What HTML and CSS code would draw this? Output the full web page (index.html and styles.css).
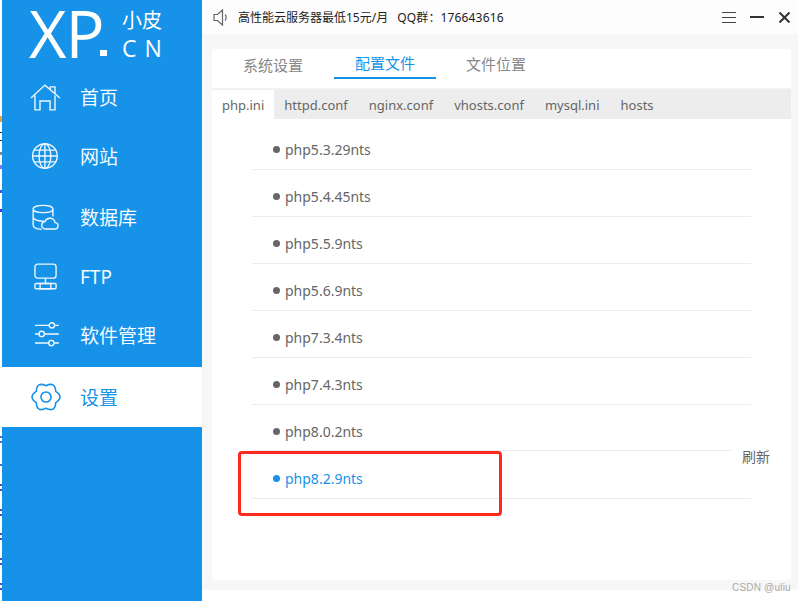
FILE: index.html
```html
<!DOCTYPE html>
<html lang="zh">
<head>
<meta charset="utf-8">
<title>小皮面板</title>
<link rel="stylesheet" href="styles.css">
</head>
<body>
<div class="app">
  <div class="edge"></div>
  <aside class="sidebar">
    <div class="logo">
      <span class="logo-xp">XP<i class="logo-dot"></i></span>
      <span class="logo-side"><span class="logo-cn">小皮</span><span class="logo-en">CN</span></span>
    </div>
    <nav class="nav">
      <a class="nav-item"><svg class="nav-icon" viewBox="0 0 28 26"><path d="M0 14 13 1.900 27 14M3.700 11.500V25h4.700v-8.300h9.400V25h4.600V11.500M18 5.500V3.500h4.400V10"/></svg><span>首页</span></a>
      <a class="nav-item up1"><svg class="nav-icon" viewBox="0 0 28 26"><circle cx="13" cy="13" r="11.500"/><ellipse cx="13" cy="13" rx="5.500" ry="11.500"/><path d="M13 1.500v23M1.500 13h23M3 7.500h20M3 18.500h20"/></svg><span>网站</span></a>
      <a class="nav-item"><svg class="nav-icon" viewBox="0 0 28 26"><path d="M2 5.500c0-4.500 18.500-4.500 18.500 0s-18.500 4.500-18.500 0v15c0 2.500 4 3.800 8 4M2 13c0 2.500 5 4 10 4M20.500 5.500v7"/><path d="M14 24.200h8a3 3 0 0 0 .5-6 5 5 0 0 0-9.500-1 3.500 3.500 0 0 0 1 7z"/></svg><span>数据库</span></a>
      <a class="nav-item"><svg class="nav-icon" viewBox="0 0 28 26"><rect x="3.700" y="1" width="19.700" height="13" rx="2.500"/><path d="M13.500 14v5M8.500 19h10v5h-10z"/><rect x="3.700" y="19" width="19.700" height="5" rx="1"/></svg><span>FTP</span></a>
      <a class="nav-item up2"><svg class="nav-icon" viewBox="0 0 28 26"><path d="M3.700 4h13.300M22 4h4M3.700 12h3.800M12.500 12h13.500M3.700 20.500h12.800M21.500 20.500h4.500"/><circle cx="19.500" cy="4" r="2.500"/><circle cx="10" cy="12" r="2.500"/><circle cx="19" cy="20.500" r="2.500"/></svg><span>软件管理</span></a>
      <a class="nav-item active"><svg class="nav-icon" viewBox="0 0 28 26"><circle cx="14" cy="13" r="4.700"/><path stroke-linejoin="round" d="M23.090 18.250Q31 13 23.090 7.750 22.500 -1.720 14 2.500 5.500 -1.720 4.910 7.750 -3 13 4.910 18.250 5.500 27.720 14 23.500 22.500 27.720 23.090 18.250z"/></svg><span>设置</span></a>
    </nav>
  </aside>
  <main class="main">
    <header class="topbar">
      <svg class="speaker" viewBox="0 0 15 17"><path d="M1 5.500h3.500L9.500 1v15l-5-4.500H1zM12 5.500c1.500 1.500 1.500 4.500 0 6"/></svg>
      <span class="notice">高性能云服务器最低15元/月</span>
      <span class="notice qq">QQ群：176643616</span>
      <div class="win-controls">
        <span class="ctl-menu"></span>
        <span class="ctl-min"></span>
        <svg class="ctl-close" viewBox="0 0 11 11"><path d="M.5.500l10 10M10.500.500l-10 10"/></svg>
      </div>
    </header>
    <section class="body">
      <div class="card">
        <div class="tabs">
          <a class="tab">系统设置</a>
          <a class="tab current">配置文件</a>
          <a class="tab last">文件位置</a>
        </div>
        <div class="subtabs">
          <a class="subtab current">php.ini</a>
          <a class="subtab">httpd.conf</a>
          <a class="subtab">nginx.conf</a>
          <a class="subtab">vhosts.conf</a>
          <a class="subtab">mysql.ini</a>
          <a class="subtab">hosts</a>
        </div>
        <ul class="list">
          <li class="row"><span class="dot"></span>php5.3.29nts</li>
          <li class="row"><span class="dot"></span>php5.4.45nts</li>
          <li class="row"><span class="dot"></span>php5.5.9nts</li>
          <li class="row"><span class="dot"></span>php5.6.9nts</li>
          <li class="row"><span class="dot"></span>php7.3.4nts</li>
          <li class="row"><span class="dot"></span>php7.4.3nts</li>
          <li class="row short"><span class="dot"></span>php8.0.2nts</li>
          <li class="row selected"><span class="dot"></span>php8.2.9nts</li>
        </ul>
      </div>
    </section>
  </main>
  <a class="refresh">刷新</a>
  <div class="mark"></div>
  <span class="watermark">CSDN @uliu</span>
</div>
</body>
</html>
```
FILE: styles.css
```css
* { box-sizing: border-box; }
html, body { margin: 0; padding: 0; }
body { width: 798px; height: 601px; overflow: hidden; background: #fff; font-family: "Noto Sans", "Noto Sans CJK SC", sans-serif; }
a { display: block; }
.app { position: relative; display: flex; width: 798px; height: 601px; }
.edge { width: 2px; flex: none; background: linear-gradient(#fff 116px, #f0a030 116px, #f0a030 122px, #fff 122px, #fff 132px, #333 132px, #333 133px, #fff 133px, #fff 140px, #333 140px, #333 141px, #fff 141px, #fff 152px, #888 152px, #888 155px, #fff 155px, #fff 165px, #7a7aee 165px, #7a7aee 169px, #fff 169px, #fff 190px, #3a5ae8 190px, #3a5ae8 193px, #fff 193px, #fff 209px, #3a3ae8 209px, #3a3ae8 212px, #fff 212px, #fff 436px, #4a70d0 436px, #4a70d0 438px, #fff 438px, #fff 441px, #4a70d0 441px, #4a70d0 443px, #fff 443px, #fff 464px, #4a70d0 464px, #4a70d0 466px, #fff 466px, #fff 484px, #4a50c0 484px, #4a50c0 486px, #fff 486px, #fff 489px, #4a50c0 489px, #4a50c0 491px, #fff 491px, #fff 509px, #4a50c0 509px, #4a50c0 511px, #fff 511px, #fff 514px, #4a50c0 514px, #4a50c0 516px, #fff 516px, #fff 533px, #4a50c0 533px, #4a50c0 535px, #fff 535px, #fff 538px, #4a50c0 538px, #4a50c0 540px, #fff 540px, #fff 558px, #4a50c0 558px, #4a50c0 560px, #fff 560px, #fff 563px, #4a50c0 563px, #4a50c0 565px, #fff 565px, #fff 583px, #4a50c0 583px, #4a50c0 585px, #fff 585px, #fff 588px, #4a50c0 588px, #4a50c0 590px, #fff 590px); }
.sidebar { width: 200px; flex: none; background: #1692e8; color: #fff; }
.logo { height: 67px; display: flex; padding-left: 27px; }
.logo-xp { font: 400 65px/66px "Open Sans", sans-serif; letter-spacing: -1px; width: 93px; height: 66px; position: relative; white-space: nowrap; }
.logo-dot { position: absolute; left: 71px; top: 50px; width: 7px; height: 6px; background: #fff; }
.logo-side { display: flex; flex-direction: column; }
.logo-cn { font: 400 20px/20px "Noto Sans CJK SC", sans-serif; margin-top: 10px; white-space: nowrap; }
.logo-en { font: 400 23px/23px "Open Sans", sans-serif; letter-spacing: 8px; margin-top: 7px; white-space: nowrap; }
.nav-item { display: flex; align-items: center; height: 60px; padding-left: 29px; font-size: 19px; color: #f4faff; }
.nav-item span { margin-left: 19px; }
.up1 { padding-bottom: 2px; }
.up2 { padding-bottom: 4px; }
.nav-icon { width: 30px; height: 28px; fill: none; stroke: #eef7fe; stroke-width: 1.300; flex: none; overflow: visible; }
.nav-item.active { background: #fff; color: #1692e8; }
.nav-item.active .nav-icon { stroke: #1692e8; stroke-width: 1.500; }
.main { flex: 1; display: flex; flex-direction: column; }
.topbar { height: 34px; flex: none; background: #fdfdfd; display: flex; align-items: center; padding-left: 11px; font-size: 12px; color: #222; }
.speaker { width: 15px; height: 17px; fill: none; stroke: #666; stroke-width: 1.200; }
.notice { margin-left: 10px; }
.qq { margin-left: 9px; letter-spacing: .15px; }
.win-controls { margin-left: auto; display: flex; align-items: center; padding-right: 8px; }
.ctl-menu { width: 14px; height: 11px; border-top: 1px solid #444; border-bottom: 1px solid #444; position: relative; margin-right: 14px; }
.ctl-menu::after { content: ""; position: absolute; left: 0; right: 0; top: 4px; height: 1px; background: #444; }
.ctl-min { width: 14px; height: 2px; background: #333; margin-right: 15px; }
.ctl-close { width: 11px; height: 11px; fill: none; stroke: #333; stroke-width: 2; }
.body { height: 556px; flex: none; background: #f7f7f7; padding: 15px 7px 10px 10px; }
.card { height: 531px; background: #fff; }
.tabs { height: 40px; display: flex; padding-left: 10px; gap: 10px; border-bottom: 1px solid #f3f3f3; }
.tab { width: 102px; height: 30px; text-align: center; font-size: 15px; line-height: 32px; color: #888; }
.tab.current { color: #1692e8; border-bottom: 2px solid #1692e8; line-height: 28px; }
.tab.last { margin-left: -1px; line-height: 31px; }
.subtabs { height: 30px; display: flex; background: #ededed; font-size: 13px; color: #666; }
.subtab { padding: 0 10.500px; line-height: 32px; }
.subtab.current { background: #fff; margin-top: 1px; line-height: 30px; padding: 0 9.500px 0 10px; }
.list { list-style: none; margin: 0; padding: 4px 40px 0; color: #666; font-size: 14px; }
.row { height: 47px; display: flex; align-items: center; padding: 6px 0 0 21px; border-bottom: 1px solid #ebebeb; }
.short { border-bottom-color: transparent; background: linear-gradient(#ebebeb, #ebebeb) 0 100% / 479px 1px no-repeat; }
.dot { width: 7px; height: 7px; border-radius: 50%; background: #666; margin-right: 5px; }
.selected { color: #1692e8; }
.selected .dot { background: #1692e8; }
.refresh { position: absolute; left: 742px; top: 448px; font-size: 14px; line-height: 18px; color: #666; }
.mark { position: absolute; left: 238px; top: 451px; width: 264px; height: 65px; border: 3px solid #fb2a1e; border-radius: 4px; }
.watermark { position: absolute; left: 732px; top: 581px; font: 10px/14px "Liberation Sans", sans-serif; letter-spacing: .2px; color: #aaa; }
```
